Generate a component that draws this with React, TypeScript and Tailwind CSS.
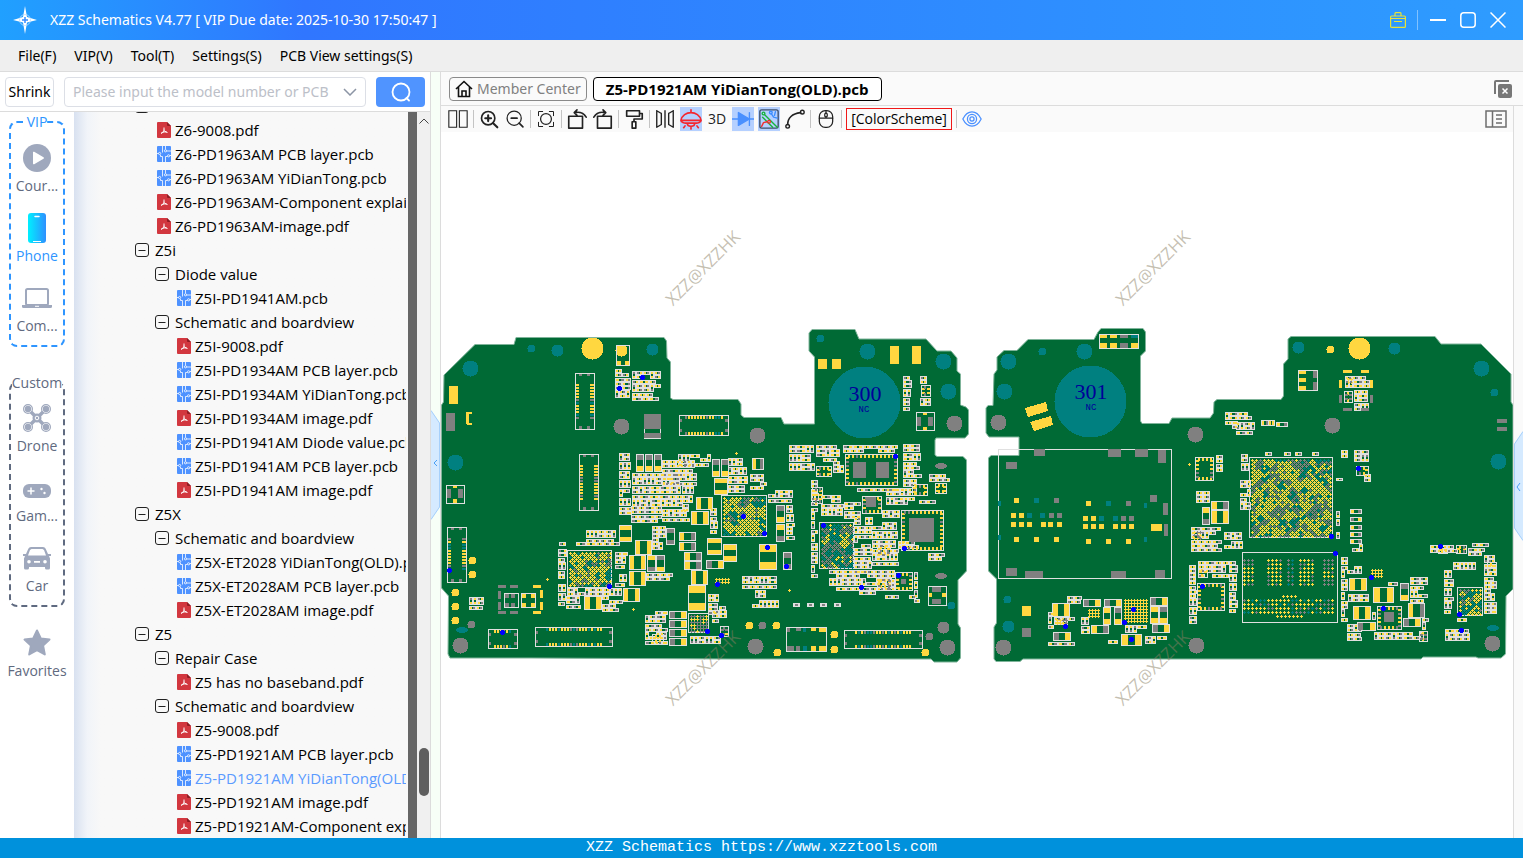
import type { ReactNode } from "react";

const Y = "#ffd740";
const G = "#808080";
const T = "#008080";
const W = "#e0e0e0";
const B = "#0000ff";

type Part = [number, number, number, number];

/* ---------- board data ---------- */

const OUTLINES = [
  "M444 375 475 344.500H514L516 337.500H664L666.500 341 667 358 670.500 362V398L673 399.500H738L741 404V415L744 417.500H781L784 424H814.500V357L809 351V333L812 329.500H855L859 339H926L937 351H951L957 358V371L960.500 374V405L966 407 968.500 410V434L965 438H936L935 440V455L937 456.500H963L966.500 460V571L958 580V624L960.500 628V658L957 662H934L931 659H731L531 658H450L448 654 448.500 596 441.500 588V405L443.500 402Z",
  "M1028 339.500H1094L1098 332 1101 328.500H1143L1145.500 332V351L1140.500 356V421L1142 423.500H1169L1172 418H1210L1213.500 413 1214 402 1217 399.500H1281L1283.500 396V364L1288 359V339L1291 336.500H1435L1441 344H1481L1511 374V402L1513 405V589L1506 596 1505.500 654 1501 658H1478L1476 657H1423L1421 659H1023L1020 661.500H996L994 659V627L996.500 623V579L988.500 571V458L991 455.500H1019V437H989L986 433V408L988 405.500H993L994 374 997 370V357L1004 350.500H1017Z",
];

const DOTS: [number, number, number, string][] = [
  [470, 368, 8, T], [531, 348, 4, T], [557, 350, 6, T], [592, 348, 11, Y], [621, 350, 6, Y],
  [652, 349, 6, T], [455, 462, 8, T], [621, 426, 8, G], [757, 435, 8, G], [820, 338, 4, T],
  [867, 351, 8, T], [943, 361, 8, T], [948, 391, 8, T], [954, 423, 8, G], [472, 560, 4, Y],
  [472, 574, 4, Y], [455, 592, 4, Y], [455, 606, 4, Y], [455, 620, 4, Y], [471, 624, 4, G],
  [460, 645, 8, G], [749, 625, 4, Y], [762, 625, 4, G], [776, 625, 4, Y], [755, 646, 8, G],
  [777, 652, 4, Y], [834, 634, 4, Y], [834, 649, 4, Y], [925, 652, 4, Y], [929, 636, 4, G],
  [943, 627, 6, G], [947, 647, 8, G], [951, 605, 4, T], [864, 402, 36, T],
  [1008, 361, 8, T], [1004, 391, 8, T], [1042, 351, 4, T], [1084, 351, 8, T], [998, 422, 8, G],
  [1090, 401, 36, T], [1195, 434, 8, G], [1007, 599, 4, T], [1008, 626, 6, T], [1003, 647, 8, G],
  [1196, 645, 8, G], [1298, 347, 6, T], [1330, 349, 4, Y], [1359, 348, 11, Y], [1394, 348, 6, T],
  [1481, 368, 8, T], [1494, 392, 4, T], [1498, 461, 8, T], [1332, 425, 8, G], [1492, 643, 8, G],
];

const PADS: [number, number, number, number, string][] = [
  [449, 386, 9, 18, Y], [446, 413, 9, 18, G], [644, 414, 17, 15, G], [644, 433, 17, 5, G],
  [818, 359, 9, 10, Y], [832, 359, 9, 10, Y], [890, 346, 9, 18, Y], [912, 346, 9, 18, Y],
  [498, 585, 8, 3, G], [510, 585, 8, 3, G], [533, 585, 8, 3, Y], [498, 611, 8, 3, G],
  [510, 611, 8, 3, G], [533, 611, 8, 3, Y], [498, 591, 3, 8, G], [498, 602, 3, 8, G],
  [540, 590, 3, 8, Y], [540, 602, 3, 8, Y],
  [505, 594, 4, 4, G], [511, 594, 4, 4, G], [505, 603, 4, 4, G], [511, 603, 4, 4, G],
  [522, 594, 4, 4, Y], [531, 594, 4, 4, Y], [522, 603, 4, 4, Y], [531, 603, 4, 4, Y],
  [617, 361, 4, 4, Y], [625, 361, 4, 4, Y],
  [453, 486, 4, 2, Y], [453, 499, 4, 4, Y], [923, 413, 4, 2, Y], [923, 427, 4, 3, Y],
  [929, 593, 3, 4, Y], [942, 593, 4, 4, Y], [467, 412, 5, 2, Y], [467, 423, 5, 2, Y],
  [466, 412, 3, 12, Y], [787, 628, 3, 4, G], [796, 628, 5, 3, G], [803, 628, 3, 4, T],
  [811, 628, 5, 3, Y], [819, 628, 7, 4, Y], [787, 646, 7, 5, G], [796, 646, 4, 5, G],
  [803, 646, 4, 5, T], [811, 646, 5, 5, Y], [819, 646, 7, 5, Y],
  [1006, 462, 11, 7, G], [1034, 449, 11, 7, G], [1108, 449, 13, 8, G], [1135, 449, 13, 8, G],
  [1158, 450, 8, 13, G], [1150, 495, 7, 7, G], [1163, 503, 5, 12, G], [1164, 524, 4, 12, G],
  [1151, 524, 11, 7, Y], [1006, 568, 11, 8, G], [1025, 571, 18, 7, G], [1111, 571, 15, 7, G],
  [1155, 570, 10, 8, G], [998, 501, 3, 5, T], [998, 535, 3, 5, T], [1144, 503, 3, 5, T],
  [1144, 537, 3, 5, T], [1022, 606, 9, 10, Y], [1022, 628, 9, 9, G],
  [1343, 370, 9, 3, Y], [1361, 370, 8, 3, Y], [1339, 380, 3, 8, Y], [1370, 380, 3, 8, Y],
  [1339, 395, 3, 8, G], [1370, 395, 3, 8, G], [1343, 408, 9, 3, G], [1361, 408, 8, 3, G],
  [1497, 419, 10, 4, G], [1497, 427, 10, 4, G],
  [1100, 335, 7, 3, Y], [1110, 335, 7, 3, Y], [1120, 335, 8, 3, G], [1131, 335, 7, 3, T],
  [1100, 343, 7, 5, Y], [1110, 343, 7, 5, Y], [1120, 343, 8, 5, G], [1131, 343, 7, 5, Y],
  [1299, 371, 7, 3, Y], [1299, 378, 7, 4, Y], [1299, 386, 7, 4, Y], [1313, 371, 4, 7, G],
  [1313, 382, 4, 8, G],
];

// small square lands inside the card socket
const SOCKET_PADS: [number, number, string][] = [
  [1014, 498, Y], [1034, 498, T], [1054, 498, G], [1011, 513, Y], [1019, 513, Y], [1027, 513, T],
  [1040, 513, T], [1049, 513, G], [1057, 513, G], [1011, 522, Y], [1019, 522, Y], [1027, 522, Y],
  [1041, 522, Y], [1048, 522, Y], [1057, 522, Y], [1014, 537, Y], [1034, 537, Y], [1054, 537, Y],
  [1086, 501, Y], [1106, 501, T], [1126, 501, G], [1083, 516, Y], [1091, 516, Y], [1099, 516, T],
  [1113, 516, T], [1121, 516, G], [1129, 516, G], [1083, 524, Y], [1091, 524, Y], [1099, 524, Y],
  [1113, 524, Y], [1121, 524, Y], [1129, 524, Y], [1086, 539, Y], [1106, 539, Y], [1126, 539, Y],
];

// two-terminal parts large enough to be placed one by one
const CHIPS: [number, number, number, number, string, string][] = [
  [619, 525, 12, 16, Y, Y], [635, 540, 16, 14, Y, Y], [629, 555, 16, 14, Y, Y],
  [629, 571, 16, 14, Y, Y], [647, 555, 8, 16, Y, G], [656, 555, 8, 16, G, Y],
  [623, 588, 16, 13, Y, Y], [584, 596, 17, 13, Y, Y], [636, 454, 7, 17, G, Y],
  [645, 454, 7, 17, G, Y], [654, 454, 7, 17, G, Y], [696, 497, 16, 12, Y, Y],
  [691, 511, 17, 13, Y, Y], [666, 528, 8, 16, G, G], [679, 532, 16, 8, Y, G],
  [679, 542, 16, 8, Y, G], [707, 538, 14, 16, Y, Y], [684, 552, 17, 8, Y, G],
  [684, 561, 17, 8, Y, G], [706, 560, 17, 8, G, Y], [691, 570, 16, 14, Y, Y],
  [688, 585, 17, 25, Y, Y], [669, 611, 17, 7, G, Y], [669, 620, 17, 7, G, Y],
  [669, 629, 17, 7, G, Y], [669, 638, 17, 7, G, Y], [712, 459, 7, 17, G, Y],
  [721, 459, 7, 17, G, Y], [714, 478, 13, 16, Y, Y], [723, 544, 13, 17, Y, Y],
  [759, 544, 17, 25, Y, Y], [776, 505, 8, 17, G, Y],
  [776, 524, 8, 17, Y, G], [783, 552, 8, 17, G, G],
  [752, 458, 11, 11, Y, G], [1052, 603, 17, 13, Y, Y], [1053, 632, 17, 8, G, Y],
  [1083, 599, 17, 7, G, Y], [1104, 599, 17, 7, G, Y], [1103, 607, 7, 17, Y, Y],
  [1114, 607, 7, 17, G, Y], [1091, 625, 17, 8, Y, G], [1121, 634, 20, 11, Y, Y],
  [1150, 597, 17, 8, G, Y], [1150, 606, 8, 17, Y, Y], [1159, 606, 8, 17, G, Y],
  [1152, 624, 17, 8, G, Y], [1211, 501, 17, 8, Y, G], [1211, 510, 17, 13, Y, Y],
  [1202, 507, 7, 17, Y, G], [1349, 578, 17, 12, Y, Y], [1373, 587, 20, 15, Y, Y],
  [1353, 606, 17, 13, Y, Y], [1408, 603, 16, 14, Y, G], [1400, 583, 8, 17, G, Y],
  [1357, 622, 18, 8, G, Y], [1403, 618, 17, 8, G, Y], [1350, 509, 11, 4, Y, G],
  [1350, 517, 11, 4, G, Y], [1350, 525, 11, 4, Y, G], [1350, 532, 11, 4, Y, G],
  [1350, 539, 11, 4, Y, G], [1276, 422, 11, 4, Y, G], [1261, 420, 7, 5, Y, G],
  [1268, 420, 6, 5, Y, Y], [1265, 452, 6, 3, Y, G], [1284, 452, 6, 3, Y, G],
  [1295, 452, 6, 3, Y, G], [1312, 452, 6, 3, Y, G], [1336, 478, 6, 2, Y, G],
  [1336, 511, 3, 6, G, Y], [1336, 519, 3, 6, Y, G], [1336, 532, 3, 6, Y, G],
];

// dense fields of passives: x, y, w, h
const FIELDS: Part[] = [
  [615, 369, 15, 31], [632, 371, 28, 29], [619, 453, 12, 61], [632, 473, 50, 36],
  [631, 506, 30, 16], [662, 460, 34, 26], [678, 454, 32, 14], [682, 486, 12, 26],
  [662, 509, 27, 14], [559, 542, 60, 6], [558, 549, 8, 59], [567, 588, 55, 8],
  [586, 530, 30, 12], [615, 552, 12, 34], [652, 526, 13, 26], [646, 573, 26, 10],
  [645, 611, 22, 34], [566, 596, 14, 15], [602, 596, 20, 18], [690, 636, 30, 10],
  [710, 508, 9, 26], [728, 458, 20, 34], [750, 474, 18, 18],
  [768, 490, 26, 14], [786, 505, 8, 34], [708, 594, 13, 20], [712, 606, 14, 16],
  [742, 576, 34, 12], [755, 590, 10, 10], [752, 600, 26, 8],
  [789, 445, 26, 28], [816, 445, 24, 16], [811, 480, 8, 26], [821, 495, 22, 22],
  [833, 461, 10, 14], [811, 508, 6, 72], [844, 502, 16, 18], [843, 445, 56, 7],
  [857, 488, 50, 6], [903, 444, 18, 42], [886, 488, 30, 20], [882, 510, 18, 10],
  [854, 517, 18, 56], [872, 522, 26, 44], [829, 570, 60, 22], [898, 541, 20, 9],
  [914, 572, 5, 30], [859, 591, 20, 6], [885, 595, 30, 6], [903, 376, 8, 34],
  [920, 376, 10, 8], [920, 398, 10, 8], [929, 474, 20, 8], [919, 500, 18, 6],
  [928, 553, 16, 7], [888, 570, 6, 20], [469, 597, 17, 15],
  [1225, 412, 12, 16], [1238, 412, 18, 10], [1236, 422, 18, 12], [1216, 455, 6, 20],
  [1240, 480, 10, 30], [1241, 454, 7, 20], [1196, 491, 14, 12], [1191, 527, 30, 24],
  [1189, 565, 7, 58], [1198, 561, 30, 16], [1229, 561, 8, 52], [1224, 532, 20, 18],
  [1048, 612, 5, 16], [1054, 617, 20, 10], [1067, 596, 14, 7], [1081, 617, 8, 16],
  [1125, 625, 24, 8], [1157, 632, 12, 14], [1145, 636, 10, 10], [1048, 642, 28, 4],
  [1108, 640, 10, 5], [1345, 376, 24, 14], [1354, 390, 14, 22], [1341, 450, 10, 8],
  [1354, 450, 14, 15], [1354, 474, 4, 12], [1364, 474, 6, 8],
  [1341, 557, 6, 64], [1347, 566, 16, 11], [1352, 544, 12, 10], [1348, 594, 20, 11],
  [1347, 624, 14, 17], [1372, 608, 4, 20], [1374, 632, 50, 11], [1388, 578, 10, 8],
  [1410, 577, 17, 25], [1430, 545, 28, 10], [1453, 562, 32, 10], [1468, 548, 16, 8],
  [1444, 570, 10, 46], [1484, 555, 12, 60], [1445, 629, 28, 14], [1422, 618, 6, 12],
  [1457, 618, 14, 6], [1472, 543, 24, 3],
];

// x, y, w, h, pitch, palette; pitch 2 gives the staggered fine-pitch arrays
const BALLS: [number, number, number, number, number, string[]][] = [
  [568, 551, 43, 36, 2, [Y, Y, Y, G, T]],
  [722, 496, 44, 40, 2, [Y, Y, Y, Y, G, T]],
  [820, 523, 33, 45, 2, [Y, T, G, G, T]],
  [1123, 598, 25, 25, 3, [Y]],
  [689, 614, 19, 18, 3, [Y, G]],
  [1250, 458, 82, 79, 2, [Y, Y, Y, Y, G, T, G]],
  [1458, 588, 24, 27, 2, [Y, Y, Y, G, T]],
  [1370, 568, 14, 9, 3, [Y, Y, G]],
  [714, 577, 16, 8, 3, [Y, Y, G]],
  [1087, 608, 12, 11, 3, [Y, G]],
  [1055, 618, 12, 8, 3, [Y, G]],
  [1192, 530, 11, 10, 3, [Y, G]],
  [1346, 377, 6, 6, 3, [Y]],
  [1242, 558, 14, 28, 4, [Y, Y, G]],
  [1266, 558, 16, 28, 4, [Y, Y, G]],
  [1286, 558, 8, 28, 4, [T, T, G]],
  [1298, 558, 15, 28, 4, [Y, Y, G]],
  [1322, 558, 14, 28, 4, [Y, G, G]],
  [1242, 598, 94, 16, 4, [Y, Y, G, T]],
  [1275, 614, 30, 4, 4, [Y]],
  [1281, 594, 16, 4, 4, [Y]],
];

const FRAMES: Part[] = [
  [998, 449, 173, 129], [1242, 552, 95, 70], [1249, 457, 83, 80], [567, 550, 44, 37],
  [721, 495, 45, 41], [819, 522, 34, 46], [688, 613, 20, 19], [1457, 587, 25, 28],
  [1099, 334, 39, 14], [1298, 370, 19, 20], [504, 593, 14, 14], [521, 593, 14, 14],
  [616, 345, 13, 20], [446, 485, 18, 18], [916, 412, 18, 18], [928, 586, 18, 19],
  [644, 414, 16, 24], [786, 627, 40, 24],
];

// outlined packages with a row of pins on each long side
const CONNECTORS: [number, number, number, number, boolean][] = [
  [575, 373, 19, 56, true], [579, 454, 19, 56, true], [447, 527, 19, 55, true],
  [679, 415, 49, 20, false], [535, 627, 77, 19, false], [844, 630, 78, 18, false],
  [488, 629, 29, 19, false],
];

const QFNS: Part[] = [
  [845, 454, 52, 31], [901, 510, 42, 40], [862, 496, 19, 17], [895, 572, 17, 18],
  [1377, 606, 24, 23], [1197, 583, 27, 27], [1195, 457, 18, 23], [921, 385, 9, 11],
  [816, 466, 15, 10], [912, 484, 15, 11], [935, 483, 11, 10], [652, 634, 11, 9],
  [1344, 391, 8, 11], [1356, 466, 12, 9], [1419, 631, 8, 10], [812, 487, 10, 16],
  [877, 578, 14, 10], [877, 545, 13, 10], [720, 626, 8, 10], [1438, 546, 9, 7],
  [1456, 545, 10, 8], [1487, 562, 9, 13], [1198, 568, 9, 9],
];

const SLUGS: Part[] = [
  [853, 462, 13, 16], [876, 462, 13, 16], [909, 518, 25, 24], [866, 497, 10, 10],
  [1384, 612, 10, 10], [901, 579, 5, 5], [917, 417, 4, 9], [928, 417, 5, 9],
  [447, 489, 4, 9], [458, 489, 5, 9], [932, 587, 9, 5], [932, 599, 9, 5],
];

const PIN_ONE: [number, number][] = [
  [642, 377], [619, 388], [449, 570], [502, 632], [609, 586], [717, 584], [743, 516], [764, 533],
  [767, 547], [786, 566], [707, 631], [721, 635], [823, 525], [895, 456], [904, 548], [898, 575],
  [861, 587], [1133, 609], [1124, 622], [1131, 639], [1065, 626], [1202, 586], [1358, 468],
  [1331, 536], [1335, 553], [1371, 577], [1383, 608], [1440, 546], [1459, 614], [1461, 630],
];

/* ---------- board drawing ---------- */

type Add = (color: string, d: string) => void;

function seeded(seed: number) {
  let s = seed;
  return () => {
    s = (s * 1103515245 + 12345) % 2147483648;
    return s / 2147483648;
  };
}

function chipPath(x: number, y: number, w: number, h: number, add: Add, a: string, b: string) {
  add("frame", `M${x} ${y}h${w}v${h}h${-w}z`);
  if (w >= h) {
    const t = Math.max(2, Math.round(w * 0.28));
    add(a, `M${x + 1} ${y + 1}h${t}v${h - 1}h${-t}z`);
    add(b, `M${x + w - t} ${y + 1}h${t}v${h - 1}h${-t}z`);
  } else {
    const t = Math.max(2, Math.round(h * 0.28));
    add(a, `M${x + 1} ${y + 1}h${w - 1}v${t}h${1 - w}z`);
    add(b, `M${x + 1} ${y + h - t}h${w - 1}v${t}h${1 - w}z`);
  }
}

function buildPaths() {
  const rnd = seeded(77);
  const out: Record<string, string> = { frame: "", [Y]: "", [G]: "", [T]: "" };
  const add: Add = (c, d) => {
    out[c] += d;
  };
  const pick = (list: string[]) => list[Math.floor(rnd() * list.length)];
  const ends = (): [string, string] => (rnd() < 0.5 ? [Y, G] : rnd() < 0.6 ? [Y, Y] : [G, Y]);

  FIELDS.forEach(([fx, fy, fw, fh]) => {
    let y = fy;
    while (y + 3 <= fy + fh) {
      const left = fy + fh - y;
      const shelf = left >= 8 && rnd() < 0.6 ? 8 : 3;
      let x = fx;
      while (x + 3 <= fx + fw) {
        if (shelf === 8 && (rnd() < 0.45 || x + 6 > fx + fw)) {
          if (rnd() < 0.95) chipPath(x, y, 3, 7, add, ...ends());
          x += 4;
          continue;
        }
        const w = Math.min(rnd() < 0.3 ? 9 : 6, fx + fw - x);
        if (w >= 5) {
          if (rnd() < 0.92) chipPath(x, y, w, 3, add, ...ends());
          if (shelf === 8 && rnd() < 0.92) chipPath(x, y + 4, w, 3, add, ...ends());
        }
        x += w + 1;
      }
      y += shelf + 1;
    }
  });

  BALLS.forEach(([bx, by, bw, bh, pitch, colors]) => {
    const staggered = pitch === 2;
    const stepX = staggered ? 4 : pitch;
    const patches = new Map<string, string>();
    let row = 0;
    for (let y = by + 2; y < by + bh; y += pitch, row++) {
      const shift = staggered && row % 2 ? 2 : 0;
      for (let x = bx + 2 + shift; x < bx + bw; x += stepX) {
        const key = `${Math.floor((x + y) / 9)}:${Math.floor((x - y) / 9)}`;
        if (!patches.has(key)) patches.set(key, pick(colors));
        const c = rnd() < 0.6 ? patches.get(key)! : pick(colors);
        add(c, `M${x - 1} ${y}h3v1h-3zM${x} ${y - 1}h1v3h-1z`);
      }
    }
  });

  CONNECTORS.forEach(([x, y, w, h, vertical]) => {
    add("frame", `M${x} ${y}h${w}v${h}h${-w}z`);
    const len = vertical ? h : w;
    const inset = len > 50 ? 11 : 6;
    for (let p = inset; p < len - inset; p += 3) {
      const c = pick([Y, Y, Y, Y, G, T]);
      if (vertical) add(c, `M${x + 1} ${y + p}h3v2h-3zM${x + w - 4} ${y + p}h4v2h-4z`);
      else add(c, `M${x + p} ${y + 1}h2v3h-2zM${x + p} ${y + h - 3}h2v3h-2z`);
    }
    if (vertical) add(G, `M${x + 4} ${y + 1}h3v2h-3zM${x + 12} ${y + 1}h3v2h-3zM${x + 4} ${y + h - 3}h3v3h-3zM${x + 12} ${y + h - 3}h3v3h-3z`);
    else add(G, `M${x + 1} ${y + 4}h2v3h-2zM${x + 1} ${y + h - 6}h2v3h-2zM${x + w - 3} ${y + 4}h3v3h-3zM${x + w - 3} ${y + h - 6}h3v3h-3z`);
  });

  QFNS.forEach(([x, y, w, h]) => {
    add("frame", `M${x} ${y}h${w}v${h}h${-w}z`);
    for (let p = 3; p < w - 2; p += 4) add(pick([Y, Y, G]), `M${x + p} ${y + 1}h2v3h-2zM${x + p} ${y + h - 3}h2v3h-2z`);
    for (let p = 3; p < h - 2; p += 4) add(pick([Y, Y, G]), `M${x + 1} ${y + p}h3v2h-3zM${x + w - 3} ${y + p}h3v2h-3z`);
  });

  CHIPS.forEach(([x, y, w, h, a, b]) => chipPath(x, y, w, h, add, a, b));
  FRAMES.forEach(([x, y, w, h]) => add("frame", `M${x} ${y}h${w}v${h}h${-w}z`));
  return out;
}

const PATHS = buildPaths();
const CHIP_BACKS = CHIPS.map(([x, y, w, h]) => `M${x} ${y}h${w}v${h}h${-w}z`).join("");

function Board() {
  return (
    <svg className="block h-full w-full" viewBox="441 132 1072 706" role="img" aria-label="Board view">
      <g fill="#006a35" stroke="#7fb49a" strokeWidth="1" strokeLinejoin="round">
        {OUTLINES.map((d) => (
          <path key={d} d={d} />
        ))}
      </g>
      <g shapeRendering="crispEdges">
        {DOTS.map(([x, y, r, c]) => (
          <circle key={`${x}-${y}`} cx={x + 0.5} cy={y + 0.5} r={r} fill={c} />
        ))}
        <path d={CHIP_BACKS} fill="#006a35" />
        <path d={PATHS.frame} fill="none" stroke={W} transform="translate(.5 .5)" />
        <path d={PATHS[Y]} fill={Y} />
        <path d={PATHS[G]} fill={G} />
        <path d={PATHS[T]} fill={T} />
        {PADS.map(([x, y, w, h, c]) => (
          <rect key={`${x}-${y}-${w}`} x={x} y={y} width={w} height={h} fill={c} />
        ))}
        {SOCKET_PADS.map(([x, y, c]) => (
          <rect key={`${x}-${y}`} x={x} y={y} width="5" height="5" fill={c} />
        ))}
        {SLUGS.map(([x, y, w, h]) => (
          <rect key={`${x}-${y}`} x={x} y={y} width={w} height={h} fill={G} />
        ))}
        <path d="M1025 408 1046 402 1048 411 1028 417ZM1030 422 1051 416 1053 425 1034 431Z" fill={Y} />
        <ellipse cx="462" cy="630" rx="6" ry="3" fill={T} />
        <ellipse cx="941" cy="466" rx="6" ry="3" fill={G} />
        <ellipse cx="941" cy="576" rx="6" ry="3" fill={G} />
        <ellipse cx="1493" cy="628" rx="6" ry="3" fill={T} />
        <path d="M793 605h7M807 605h7M820 605h7M834 605h7" stroke={W} strokeWidth="4" />
        <path d="M795 605h3M809 605h3M822 605h3M836 605h3" stroke={G} strokeWidth="2" />
        <path d="M546 579h3M547.500 577.500v3M632 609h3M633.500 607.500v3M735 453h3M736.500 451.500v3M788 590h3M789.500 588.500v3M1188 464h3M1189.500 462.500v3" stroke={Y} />
        {PIN_ONE.map(([x, y]) => (
          <circle key={`${x}-${y}`} cx={x + 0.5} cy={y + 0.5} r="2.500" fill={B} />
        ))}
      </g>
      <g fill="#000099" textAnchor="middle">
        <g fontSize="22" className="font-['Liberation_Serif',serif]">
          <text x="865" y="401">300</text>
          <text x="1091" y="399">301</text>
        </g>
        <g fontSize="9" className="font-['Liberation_Mono',monospace]">
          <text x="864" y="412">NC</text>
          <text x="1091" y="410">NC</text>
        </g>
      </g>
      <g fill="#8c7f66" fillOpacity=".5" fontSize="17" textAnchor="middle" className="font-['Open_Sans',sans-serif]">
        {[[703, 268], [1153, 268], [703, 668], [1153, 668]].map(([x, y]) => (
          <text key={`${x}-${y}`} x={x} y={y + 6} transform={`rotate(-45 ${x} ${y})`}>
            XZZ@XZZHK
          </text>
        ))}
      </g>
    </svg>
  );
}

/* ---------- icons ---------- */

function Icon({ size = 22, children }: { size?: number; children: ReactNode }) {
  return (
    <svg
      width={size}
      height={size}
      viewBox="0 0 24 24"
      fill="none"
      stroke="currentColor"
      strokeWidth="1.500"
      strokeLinecap="round"
      strokeLinejoin="round"
      className="shrink-0"
      aria-hidden="true"
    >
      {children}
    </svg>
  );
}

function PdfIcon() {
  return (
    <svg width="14" height="16" viewBox="0 0 14 16" className="shrink-0" aria-hidden="true">
      <path d="M1 0h9l4 4v11a1 1 0 0 1-1 1H1a1 1 0 0 1-1-1V1a1 1 0 0 1 1-1z" fill="#d2373f" />
      <path d="M10 0l4 4h-3a1 1 0 0 1-1-1z" fill="#8f1d24" />
      <path d="M7 5.500v2c0 1.500-1 3.500-3 4M7 7.500c0 1.500 1.500 3 3.500 3M4.500 10.500l5-1" fill="none" stroke="#fff" />
    </svg>
  );
}

function PcbIcon() {
  return (
    <svg width="14" height="16" viewBox="0 0 14 16" className="shrink-0" aria-hidden="true">
      <rect width="14" height="16" rx="1" fill="#4e92ff" />
      <g fill="none" stroke="#fff" strokeWidth=".8">
        <path d="M5.500 0v6.500M8.500 0v3.500M0 7.500h1.500M3.500 9v1.500H5.500V16M8.500 16v-5.500h2M14 9.500h-1M9.500 5H14" />
        <circle cx="8.500" cy="4.800" r="1.100" />
        <circle cx="2.600" cy="7.500" r="1.100" />
        <circle cx="11.600" cy="9.800" r="1.100" />
      </g>
    </svg>
  );
}

function FoldIcon() {
  return (
    <svg width="14" height="14" viewBox="0 0 14 14" fill="none" stroke="#222" className="shrink-0" aria-hidden="true">
      <rect x=".5" y=".5" width="13" height="13" rx="2.500" />
      <path d="M3.500 7.500h7" />
    </svg>
  );
}

/* ---------- tree ---------- */

type Kind = "fold" | "pdf" | "pcb";
const TREE: [number, Kind, string][] = [
  [0, "fold", "Z6"],
  [1, "pdf", "Z6-9008.pdf"],
  [1, "pcb", "Z6-PD1963AM PCB layer.pcb"],
  [1, "pcb", "Z6-PD1963AM YiDianTong.pcb"],
  [1, "pdf", "Z6-PD1963AM-Component explain.pdf"],
  [1, "pdf", "Z6-PD1963AM-image.pdf"],
  [0, "fold", "Z5i"],
  [1, "fold", "Diode value"],
  [2, "pcb", "Z5I-PD1941AM.pcb"],
  [1, "fold", "Schematic and boardview"],
  [2, "pdf", "Z5I-9008.pdf"],
  [2, "pcb", "Z5I-PD1934AM PCB layer.pcb"],
  [2, "pcb", "Z5I-PD1934AM YiDianTong.pcb"],
  [2, "pdf", "Z5I-PD1934AM image.pdf"],
  [2, "pcb", "Z5I-PD1941AM Diode value.pcb"],
  [2, "pcb", "Z5I-PD1941AM PCB layer.pcb"],
  [2, "pdf", "Z5I-PD1941AM image.pdf"],
  [0, "fold", "Z5X"],
  [1, "fold", "Schematic and boardview"],
  [2, "pcb", "Z5X-ET2028 YiDianTong(OLD).pcb"],
  [2, "pcb", "Z5X-ET2028AM PCB layer.pcb"],
  [2, "pdf", "Z5X-ET2028AM image.pdf"],
  [0, "fold", "Z5"],
  [1, "fold", "Repair Case"],
  [2, "pdf", "Z5 has no baseband.pdf"],
  [1, "fold", "Schematic and boardview"],
  [2, "pdf", "Z5-9008.pdf"],
  [2, "pcb", "Z5-PD1921AM PCB layer.pcb"],
  [2, "pcb", "Z5-PD1921AM YiDianTong(OLD).pcb"],
  [2, "pdf", "Z5-PD1921AM image.pdf"],
  [2, "pdf", "Z5-PD1921AM-Component explain.pdf"],
];

const INDENT = ["pl-[61px]", "pl-[81px]", "pl-[101px]"];

function Tree() {
  return (
    <div className="min-w-0 flex-1 overflow-hidden bg-[#f8f8f8] bg-linear-to-r from-[#d8e1f0] via-[#f1f4f9] via-4% to-[#f8f8f8] to-8%">
      <ul className="-mt-[18px] mr-0.5">
        {TREE.map(([level, kind, name], i) => (
          <li key={i} className={`flex h-6 items-center overflow-hidden whitespace-nowrap ${INDENT[level]} ${i === 28 ? "text-[#5b9bff]" : "text-black"}`}>
            <span className="flex w-5 shrink-0">
              {kind === "fold" ? <FoldIcon /> : <span className="pl-0.5">{kind === "pdf" ? <PdfIcon /> : <PcbIcon />}</span>}
            </span>
            {name}
          </li>
        ))}
      </ul>
    </div>
  );
}

/* ---------- side navigation ---------- */

function NavItem({ label, active, children }: { label: string; active?: boolean; children: ReactNode }) {
  return (
    <button className={`flex w-full flex-col items-center whitespace-nowrap ${active ? "text-[#2e95ff]" : "text-[#5f6a80]"}`}>
      <span className="flex h-9 items-center">{children}</span>
      <span className="leading-5">{label}</span>
    </button>
  );
}

function SideNav() {
  return (
    <nav className="w-[74px] shrink-0 bg-white text-sm">
      <fieldset className="mx-[9px] rounded-lg border-2 border-dashed border-[#2e95ff] pb-[9px]">
        <legend className="mx-auto leading-5 text-[#2e95ff]">VIP</legend>
        <div className="flex flex-col gap-[14px] pt-2">
          <NavItem label="Cour...">
            <svg width="28" height="28" viewBox="0 0 28 28" aria-hidden="true">
              <circle cx="14" cy="14" r="14" fill="#9fa8bd" />
              <path d="M10 8.500v11a.8.8 0 0 0 1.200.7l9.300-5.500a.8.8 0 0 0 0-1.400l-9.300-5.500a.8.8 0 0 0-1.200.7z" fill="#fff" />
            </svg>
          </NavItem>
          <NavItem label="Phone" active>
            <svg width="18" height="30" viewBox="0 0 18 30" aria-hidden="true">
              <defs>
                <linearGradient id="phone" x1="0" x2="1">
                  <stop stopColor="#00f0ff" />
                  <stop offset="1" stopColor="#2e90ff" />
                </linearGradient>
              </defs>
              <rect width="18" height="30" rx="3" fill="url(#phone)" />
              <path d="M7 3.500h4" stroke="#fff" strokeWidth="1.500" strokeLinecap="round" />
              <path d="M5 28.500h8" stroke="#fff" strokeWidth="1" />
            </svg>
          </NavItem>
          <NavItem label="Com...">
            <svg width="30" height="20" viewBox="0 0 30 20" aria-hidden="true">
              <rect x="4" y="1" width="22" height="16" rx="1.500" fill="none" stroke="#9fa8bd" strokeWidth="2" />
              <path d="M0 17h30v1.500a1.500 1.500 0 0 1-1.500 1.500h-27A1.500 1.500 0 0 1 0 18.500z" fill="#9fa8bd" />
              <path d="M13 18.300h4" stroke="#fff" />
            </svg>
          </NavItem>
        </div>
      </fieldset>
      <fieldset className="mx-[9px] mt-[26px] rounded-lg border-2 border-dashed border-[#5f6a80] pb-[9px]">
        <legend className="mx-auto leading-5 text-[#5f6a80]">Custom</legend>
        <div className="flex flex-col gap-[14px] pt-[7px]">
          <NavItem label="Drone">
            <svg width="28" height="28" viewBox="0 0 28 28" fill="none" stroke="#9fa8bd" aria-hidden="true">
              <path d="M5.500 5.500l17 17M22.500 5.500l-17 17" strokeWidth="3.500" />
              <circle cx="14" cy="14" r="3.500" fill="#9fa8bd" strokeWidth="2" />
              <circle cx="14" cy="14" r="1.800" stroke="#fff" />
              {[[5, 5], [23, 5], [5, 23], [23, 23]].map(([x, y]) => (
                <g key={`${x}-${y}`}>
                  <circle cx={x} cy={y} r="4.400" fill="#fff" strokeWidth="1.200" />
                  <circle cx={x} cy={y} r="3.200" fill="#9fa8bd" stroke="none" />
                </g>
              ))}
            </svg>
          </NavItem>
          <NavItem label="Gam...">
            <svg width="28" height="20" viewBox="0 0 28 20" aria-hidden="true">
              <rect y="6" width="28" height="14" rx="6" fill="#9fa8bd" />
              <path d="M8 9.500v7M4.500 13h7" stroke="#fff" strokeWidth="1.500" />
              <circle cx="18.500" cy="11" r="1.200" fill="#fff" />
              <circle cx="21.500" cy="15" r="1.200" fill="#fff" />
            </svg>
          </NavItem>
          <NavItem label="Car">
            <svg width="28" height="24" viewBox="0 0 28 24" aria-hidden="true">
              <path
                fillRule="evenodd"
                fill="#9fa8bd"
                d="M8 1h12a3 3 0 0 1 2.700 1.800L25 8h2.500a.8.800 0 0 1 0 2H26l1 2.500V22a1.500 1.500 0 0 1-1.500 1.500h-2A1.500 1.500 0 0 1 22 22v-1H6v1a1.500 1.500 0 0 1-1.500 1.500h-2A1.500 1.500 0 0 1 1 22v-9.500L2 10H.5a.8.800 0 0 1 0-2H3l2.300-5.200A3 3 0 0 1 8 1zm.500 2L7 4l-2 5.500h18L21 4l-1.500-1zM6 14a1.800 1.800 0 1 0 0 3.600A1.800 1.800 0 0 0 6 14zm16 0a1.800 1.800 0 1 0 0 3.600 1.800 1.800 0 0 0 0-3.600zM11 15v1.800h6V15z"
              />
            </svg>
          </NavItem>
        </div>
      </fieldset>
      <div className="mt-[18px]">
        <NavItem label="Favorites">
          <svg width="28" height="28" viewBox="0 0 28 28" aria-hidden="true">
            <path d="M14 1.500l3.800 8 8.700 1.100-6.400 6 1.700 8.800-7.800-4.300-7.800 4.300 1.700-8.800-6.400-6 8.700-1.100z" fill="#9fa8bd" stroke="#9fa8bd" strokeWidth="2" strokeLinejoin="round" />
          </svg>
        </NavItem>
      </div>
    </nav>
  );
}

/* ---------- toolbar ---------- */

function Sep() {
  return <span className="h-[18px] w-px shrink-0 bg-[#c4c4c4]" />;
}

function Tool({ label, active, children }: { label: string; active?: boolean; children: ReactNode }) {
  return (
    <button aria-label={label} className={`flex h-6 w-[22px] shrink-0 items-center justify-center ${active ? "bg-[#b5d0ff]" : ""}`}>
      {children}
    </button>
  );
}

function Toolbar() {
  return (
    <div className="flex h-[26px] shrink-0 items-center gap-1 bg-[#fafafa] px-1.5 text-sm text-[#222]">
      <Tool label="Split view">
        <Icon>
          <path strokeWidth="1.200" strokeLinejoin="miter" d="M2 3h8.500v18H2zM13.500 3H22v18h-8.500z" />
        </Icon>
      </Tool>
      <Sep />
      <Tool label="Zoom in">
        <Icon size={20}>
          <circle cx="11" cy="11" r="8" strokeWidth="2" />
          <path strokeWidth="2.500" d="M17 17l5 5M7.500 11h7M11 7.500v7" />
        </Icon>
      </Tool>
      <Tool label="Zoom out">
        <Icon size={20}>
          <circle cx="11" cy="11" r="8.500" />
          <path strokeWidth="2" d="M17 17l4.500 4.500M7.500 11h7" />
        </Icon>
      </Tool>
      <Sep />
      <Tool label="Fit">
        <Icon size={20}>
          <path strokeWidth="1.200" d="M3 8V3h5M16 3h5v5M21 16v5h-5M8 21H3v-5" />
          <circle cx="12" cy="12" r="6.500" />
        </Icon>
      </Tool>
      <Sep />
      <Tool label="Rotate left">
        <Icon>
          <path strokeWidth="1.800" d="M3 9h15v13H3zM9 5c6-1 10-.5 13 5M12 2 9 5l3 3" />
        </Icon>
      </Tool>
      <Tool label="Rotate right">
        <Icon>
          <path strokeWidth="1.800" d="M6 9h15v13H6zM2 10c3-5.500 7-6 13-5M12 2l3 3-3 3" />
        </Icon>
      </Tool>
      <Sep />
      <Tool label="Format">
        <Icon>
          <path strokeWidth="1.800" d="M4 3h14v6H4zM18 6h3v6h-9v3M10 15h4v7h-4z" />
        </Icon>
      </Tool>
      <Sep />
      <Tool label="Mirror">
        <Icon>
          <path d="M3 3v18M8 6v12M3 3l5 3M3 21l5-3M12 3v18M21 3v18M16 6v12M21 3l-5 3M21 21l-5-3" />
        </Icon>
      </Tool>
      <Tool label="Lamp" active>
        <span className="text-[#f5252d]">
          <Icon>
            <path strokeWidth="1.800" d="M12 2v3M1 13.500C2 8 7 5 12 5s10 3 11 8.500zM1 13.500c0 2 4 3 5 3h12c1 0 5-1 5-3M8 17c0 4 8 4 8 0M12 21v2M5.500 19.500l-1.500 2M18.500 19.500l1.500 2" />
          </Icon>
        </span>
      </Tool>
      <button className="shrink-0 px-0.5">3D</button>
      <Tool label="Diode" active>
        <span className="text-[#4a90ff]">
          <Icon>
            <path d="M0 12h24M19 5v14" />
            <path fill="currentColor" d="M7 5v14l12-7z" />
          </Icon>
        </span>
      </Tool>
      <Tool label="Traces" active>
        <Icon>
          <rect x="2" y="2" width="20" height="20" rx="2" stroke="#3d4f6b" />
          <path stroke="#18b33c" d="M7 7l14 14M5 10l11 11" />
          <path stroke="#f0302f" d="M4 20l2-4 4-1" />
          <path stroke="#3a8dff" d="M15 7l2 3 4 1M19 4l-1 4" />
          <circle cx="6" cy="6" r="1.500" stroke="#18b33c" />
          <circle cx="12" cy="15" r="1.500" stroke="#f0302f" />
          <circle cx="14" cy="5" r="1.500" stroke="#3a8dff" />
        </Icon>
      </Tool>
      <Tool label="Curve">
        <Icon>
          <circle cx="20" cy="4.500" r="2" />
          <circle cx="4" cy="20" r="2" />
          <path strokeWidth="1.800" d="M4 18C4 11 9 6 18 5" />
        </Icon>
      </Tool>
      <Sep />
      <Tool label="Mouse">
        <Icon size={20}>
          <rect x="4" y="2" width="16" height="20" rx="7" />
          <path d="M4 11h16M12 2v3M12 9v2" />
          <rect x="10.500" y="5" width="3" height="4.500" rx="1.500" />
        </Icon>
      </Tool>
      <Sep />
      <button className="h-[22px] shrink-0 border border-[#f01818] px-1 leading-5 text-black">[ColorScheme]</button>
      <Sep />
      <Tool label="Show">
        <span className="text-[#4a90ff]">
          <Icon size={20}>
            <path d="M1 12c3-6 7-8.500 11-8.500S20 6 23 12c-3 6-7 8.500-11 8.500S4 18 1 12z" />
            <circle cx="12" cy="12" r="5.500" />
            <circle cx="12" cy="12" r="2.500" />
          </Icon>
        </span>
      </Tool>
      <button aria-label="Side panel" className="ml-auto text-[#6e6e6e]">
        <svg width="22" height="18" viewBox="0 0 22 18" fill="none" stroke="currentColor" strokeWidth="1.500" aria-hidden="true">
          <path d="M1 1h20v16H1zM7.500 1v16M11 5h6M11 9h6M11 13h6" />
        </svg>
      </button>
    </div>
  );
}

export default function App() {
  return (
    <div className="flex h-screen flex-col overflow-hidden bg-white font-['Open_Sans','Noto_Sans',sans-serif] text-[15px] text-black">
      <header className="flex h-10 shrink-0 items-center bg-linear-to-r from-[#20a0ff] via-[#3076ff] via-20% to-[#2e9cff] text-white">
        <svg width="24" height="28" viewBox="0 0 24 28" className="ml-[13px]" aria-hidden="true">
          <path d="M12 0l2 11 10 3-10 2.500L12 28l-2-11.500L0 14l10-3z" fill="#fff" />
          <circle cx="12" cy="14" r="5.500" fill="none" stroke="#bfe0ff" strokeWidth=".8" />
          <path d="M12 11v6M9 14h6" stroke="#3a8dff" strokeWidth="1.500" />
        </svg>
        <h1 className="ml-[13px] font-['Noto_Sans',sans-serif] text-sm">XZZ Schematics V4.77 [ VIP Due date: 2025-10-30 17:50:47 ]</h1>
        <div className="mr-[17px] ml-auto flex items-center">
          <button aria-label="Toolbox" className="mr-[11px] text-[#e8e337]">
            <svg width="16" height="16" viewBox="0 0 16 16" fill="none" stroke="currentColor" strokeWidth="1.200" aria-hidden="true">
              <rect x=".6" y="4" width="14.800" height="11.400" rx="1" />
              <path d="M5 4V1.500A1 1 0 0 1 6 .6h4a1 1 0 0 1 1 .9V4M1 6.500h14M4 9.500h8" />
            </svg>
          </button>
          <span className="mr-3 h-5 w-px bg-white/40" />
          <button aria-label="Minimize" className="mr-3.5">
            <svg width="16" height="16" viewBox="0 0 16 16" stroke="currentColor" strokeWidth="2" aria-hidden="true"><path d="M0 8h16" /></svg>
          </button>
          <button aria-label="Maximize" className="mr-3.5">
            <svg width="16" height="16" viewBox="0 0 16 16" fill="none" stroke="currentColor" strokeWidth="1.500" aria-hidden="true"><rect x=".8" y=".8" width="14.400" height="14.400" rx="3" /></svg>
          </button>
          <button aria-label="Close">
            <svg width="16" height="16" viewBox="0 0 16 16" stroke="currentColor" strokeWidth="1.500" aria-hidden="true"><path d="M.5.5l15 15M15.500.500l-15 15" /></svg>
          </button>
        </div>
      </header>

      <nav className="flex h-8 shrink-0 items-center gap-[18px] border-b border-[#dcdcdc] bg-[#efefef] px-[18px] font-['Noto_Sans',sans-serif] text-sm">
        {["File(F)", "VIP(V)", "Tool(T)", "Settings(S)", "PCB View settings(S)"].map((m) => (
          <button key={m}>{m}</button>
        ))}
      </nav>

      <main className="flex min-h-0 flex-1">
        <aside className="flex w-[431px] shrink-0 flex-col border-r border-[#dcdcdc]">
          <div className="flex h-10 shrink-0 items-center border-b border-[#dcdcdc] bg-white px-[5px] font-['Noto_Sans',sans-serif] text-sm">
            <button className="h-[30px] w-[49px] shrink-0 rounded border border-[#dcdfe6]">Shrink</button>
            <label className="mx-2.5 flex h-[30px] min-w-0 flex-1 items-center rounded border border-[#dcdfe6] px-2">
              <input aria-label="Search" placeholder="Please input the model number or PCB" className="min-w-0 flex-1 outline-none placeholder:text-[#bcc0c8]" />
              <svg width="14" height="8" viewBox="0 0 14 8" fill="none" stroke="#8c95a5" strokeWidth="1.500" className="ml-1.5 shrink-0" aria-hidden="true"><path d="M1 1l6 6 6-6" /></svg>
            </label>
            <button aria-label="Search" className="flex h-[30px] w-[49px] shrink-0 items-center justify-center rounded bg-[#5094ff] text-white">
              <svg width="20" height="20" viewBox="0 0 20 20" fill="none" stroke="currentColor" strokeWidth="1.800" strokeLinecap="round" aria-hidden="true">
                <circle cx="10" cy="10" r="8.500" />
                <path d="M15.500 16l2.500 2.500" />
              </svg>
            </button>
          </div>
          <div className="flex min-h-0 flex-1">
            <SideNav />
            <Tree />
            <div className="w-[9px] shrink-0 bg-[#666]" />
            <div className="flex w-[13px] shrink-0 flex-col items-center bg-[#f0f0f0]">
              <svg width="10" height="6" viewBox="0 0 10 6" fill="none" stroke="#444" className="mt-1.5 shrink-0" aria-hidden="true"><path d="M.5 5.500L5 1l4.500 4.500" /></svg>
              <div className="flex-[624]" />
              <div className="h-12 w-2.5 rounded-full bg-[#5f5f5f]" />
              <div className="flex-[42]" />
            </div>
          </div>
        </aside>

        <button aria-label="Collapse list" className="flex w-[9px] shrink-0 items-center bg-[#f7fff7]">
          <svg width="9" height="110" viewBox="0 0 9 110" aria-hidden="true" className="mt-5">
            <path d="M0 0l9 13v84l-9 13z" fill="#d5eaff" />
            <path d="M0 .500l8.500 12.500v84L0 109.500" fill="none" stroke="#a6d0fb" />
            <path d="M6 50l-3 3 3 3" fill="none" stroke="#4a9ff5" />
          </svg>
        </button>

        <section className="flex min-w-0 flex-1 flex-col border-l border-[#dcdcdc]">
          <div className="flex h-[34px] shrink-0 items-center gap-1.5 border-b border-[#dcdcdc] bg-[#fafafa] pr-[11px] pl-2">
            <button className="flex h-6 items-center gap-1 rounded border border-[#8a8a8a] px-[5px] font-['Noto_Sans',sans-serif] text-sm text-[#808080]">
              <svg width="18" height="18" viewBox="0 0 18 18" fill="none" stroke="#111" strokeWidth="1.600" aria-hidden="true">
                <path d="M1 9l8-7.500L17 9M3.500 7v9.500h11V7M7 16.500V11h4v5.500" />
              </svg>
              Member Center
            </button>
            <button className="h-6 rounded border border-black bg-white px-3 leading-5 font-bold">Z5-PD1921AM YiDianTong(OLD).pcb</button>
            <button aria-label="Close all tabs" className="ml-auto">
              <svg width="18" height="18" viewBox="0 0 18 18" aria-hidden="true">
                <path d="M1 14V2a1 1 0 0 1 1-1h13" fill="none" stroke="#777" strokeWidth="2" />
                <rect x="4" y="4" width="14" height="14" rx="2" fill="#777" />
                <path d="M8.500 8.500l5 5M13.500 8.500l-5 5" stroke="#fff" strokeWidth="1.500" />
              </svg>
            </button>
          </div>
          <div className="flex min-h-0 flex-1">
            <div className="flex min-w-0 flex-1 flex-col">
              <Toolbar />
              <div className="min-h-0 flex-1">
                <Board />
              </div>
            </div>
            <button aria-label="Open panel" className="flex w-2.5 shrink-0 items-center border-l border-[#dcdcdc] bg-[#fafafa]">
              <svg width="9" height="110" viewBox="0 0 9 110" aria-hidden="true" className="mt-7">
                <path d="M9 0L0 13v84l9 13z" fill="#d5eaff" />
                <path d="M9 .500L.5 13v84L9 109.500" fill="none" stroke="#a6d0fb" />
                <path d="M6 52l-3 4 3 4" fill="none" stroke="#4a9ff5" />
              </svg>
            </button>
          </div>
        </section>
      </main>

      <footer className="flex h-5 shrink-0 items-center justify-center bg-[#0091dc] font-['Liberation_Mono',monospace] text-[15px] text-white">
        XZZ Schematics https://www.xzztools.com
      </footer>
    </div>
  );
}
